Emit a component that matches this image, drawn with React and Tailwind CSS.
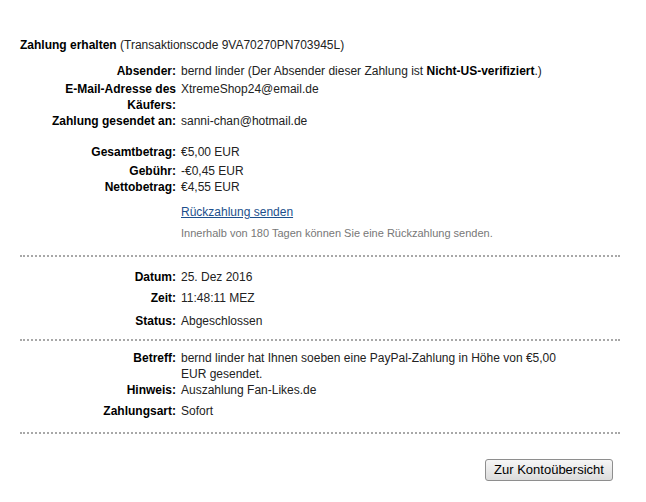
const Row = ({ label, children, className = "" }) => (
  <div className={`flex leading-[16px] ${className}`}>
    <div className="w-[156px] shrink-0 text-right font-bold text-black">{label}</div>
    <div className="ml-[5px] w-[380px] text-[#222]">{children}</div>
  </div>
);

const Divider = ({ className = "" }) => (
  <div className={`w-[600px] border-t-2 border-dotted border-[#a8a8a8] ${className}`} />
);

export default function App() {
  return (
    <div className="min-h-screen bg-white px-[20px] pt-[37px] text-[12px] font-['Liberation_Sans',Arial,sans-serif] text-black">
      <div className="leading-[16px]">
        <span className="font-bold">Zahlung erhalten</span>{" "}
        <span className="text-[#222]">(Transaktionscode 9VA70270PN703945L)</span>
      </div>

      <Row label="Absender:" className="mt-[10px]">
        bernd linder (Der Absender dieser Zahlung ist <b className="text-black">Nicht-US-verifiziert</b>.)
      </Row>
      <Row label="E-Mail-Adresse des Käufers:" className="mt-[2px]">
        XtremeShop24@email.de
      </Row>
      <Row label="Zahlung gesendet an:">sanni-chan@hotmail.de</Row>

      <Row label="Gesamtbetrag:" className="mt-[15px]">€5,00 EUR</Row>
      <Row label="Gebühr:" className="mt-[3px]">-€0,45 EUR</Row>
      <Row label="Nettobetrag:">€4,55 EUR</Row>

      <div className="ml-[161px] mt-[9px] leading-[16px]">
        <a href="#" className="text-[#1d4f8c] underline">Rückzahlung senden</a>
      </div>
      <div className="ml-[161px] mt-[6px] text-[11px] leading-[14px] text-[#777]">
        Innerhalb von 180 Tagen können Sie eine Rückzahlung senden.
      </div>

      <Divider className="mt-[15px]" />

      <Row label="Datum:" className="mt-[12px]">25. Dez 2016</Row>
      <Row label="Zeit:" className="mt-[5px]">11:48:11 MEZ</Row>
      <Row label="Status:" className="mt-[7px]">Abgeschlossen</Row>

      <Divider className="mt-[10px]" />

      <Row label="Betreff:" className="mt-[9px]">
        bernd linder hat Ihnen soeben eine PayPal-Zahlung in Höhe von €5,00 EUR gesendet.
      </Row>
      <Row label="Hinweis:">Auszahlung Fan-Likes.de</Row>
      <Row label="Zahlungsart:" className="mt-[5px]">Sofort</Row>

      <Divider className="mt-[13px]" />

      <div className="mt-[25px] flex justify-end pr-[13px]">
        <button className="h-[22px] w-[128px] rounded-[3px] border border-[#8e8e8e] bg-gradient-to-b from-[#f6f6f6] to-[#dcdcdc] text-[13px] leading-[20px] text-black">
          Zur Kontoübersicht
        </button>
      </div>
    </div>
  );
}
